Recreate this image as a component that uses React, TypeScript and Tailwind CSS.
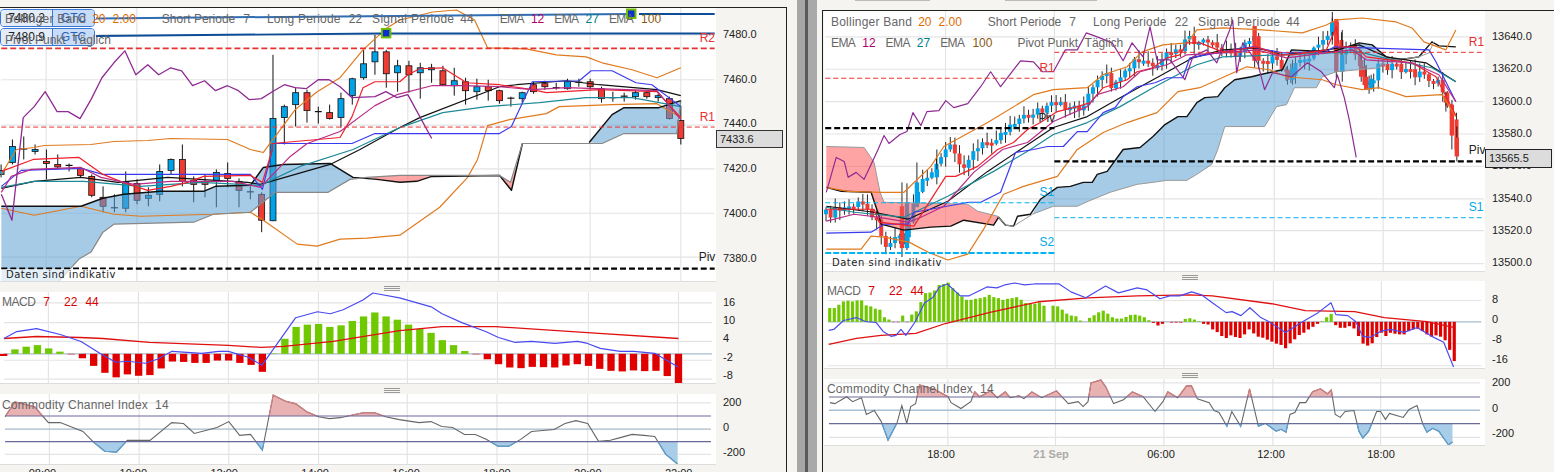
import React from 'react';

type Candle = [number, number, number, number, string];

const BLUE = '#00a2e8';
const RED = '#ee3b33';
const C_ORANGE = '#e07a1f';
const C_PURPLE = '#8e2a93';
const C_MAGENTA = '#b82c86';
const C_TEAL = '#1c8a98';
const C_KIJUN = '#3a3af0';
const C_TENKAN = '#f0202a';

// wick top, wick bottom, body top, body bottom, colour (all in screen px)
const leftCandles: Candle[] = [
  [165, 178, 171, 175, 'b'], [140, 165, 147, 163, 'b'], [137, 160, 149.5, 150.5, 'd'], [145, 155, 150, 152, 'b'],
  [150, 180, 162, 164, 'r'], [155, 170, 165, 167.5, 'r'], [164, 172, 166, 167, 'd'], [168, 178, 169, 176, 'r'],
  [175, 198, 177, 196, 'r'], [187, 213, 198, 207, 'r'], [195, 213, 208.5, 209.5, 'd'], [172, 213, 183, 209, 'b'],
  [180, 205, 184, 201, 'r'], [188, 207, 196, 199, 'b'], [165, 202, 172, 195, 'b'], [159, 175, 160, 171, 'b'],
  [145, 187, 160, 182, 'r'], [177, 203, 181, 185, 'r'], [175, 198, 183, 185, 'r'], [170, 208, 173, 182, 'b'],
  [163, 188, 174, 179, 'r'], [179, 208, 182, 191, 'r'], [185, 200, 192.5, 193.5, 'd'], [193, 233, 195, 221, 'r'],
  [55, 222, 119, 221.5, 'b'], [105, 145, 107, 118, 'b'], [88, 127, 93, 105, 'b'], [90, 123, 93, 111, 'r'],
  [107, 124, 112, 113, 'd'], [105, 120, 113, 119, 'r'], [93, 128, 99, 118, 'b'], [78, 105, 79, 96, 'b'],
  [50, 80, 64, 78, 'b'], [35, 75, 52, 62, 'b'], [50, 88, 52, 74, 'r'], [60, 92, 66, 73, 'b'],
  [61, 93, 66, 75, 'r'], [63, 99, 68, 73, 'b'], [64, 83, 68, 70, 'b'], [66, 86, 71, 85, 'r'],
  [68, 96, 81, 86, 'b'], [78, 105, 82, 91, 'r'], [79, 100, 87, 92, 'b'], [80, 101, 87, 91, 'r'],
  [90, 104, 91, 101, 'r'], [97, 107, 98.5, 99.5, 'd'], [92, 103, 93, 99, 'b'], [82, 94, 85, 92, 'r'],
  [81, 90, 84, 87, 'r'], [83, 90, 88, 89, 'd'], [79, 90, 82, 89, 'b'], [79, 87, 82.5, 83.5, 'd'],
  [79, 90, 82, 87, 'r'], [87, 103, 89, 99, 'r'], [92, 102, 98, 99, 'd'], [93, 102, 96.5, 97.5, 'd'],
  [91, 100, 93, 97, 'b'], [91, 99, 93, 97, 'r'], [94, 102, 96, 98, 'b'], [97, 120, 99, 119, 'r'],
  [106, 145, 121, 139, 'r'],
];

const leftBars = [356.7, 350, 347.3, 345.7, 349, 352.3, 355, 359, 366.7, 373.7, 378.3, 375.3, 376.7, 376, 369.3, 362.3, 362.7, 363.7, 363.7, 361.3, 361.3, 363.7, 365.7, 372.7, 354, 339.3, 327.3, 325, 324.3, 327.3, 325.7, 321.3, 316.7, 312.7, 316.7, 320, 325, 329.3, 333.3, 340.7, 345.7, 351.7, 355, 360, 365, 368.3, 369, 367.7, 368, 368.3, 366.3, 365, 366.7, 369.7, 371.7, 372.3, 371.3, 372, 371.7, 377, 384];

// zoomed-in readings of the right histogram, 0 line is 127 (3x scale)
const rightBarsZ = [85, 85, 75, 65, 63, 65, 62, 62, 77, 80, 87, 90, 113, 120, 128, 128, 108, 128, 105, 95, 67, 40, 38, 32, 15, 12, 8, 25, 38, 50, 60, 60, 57, 55, 52, 45, 52, 55, 60, 57, 55, 52, 60, 70, 70, 72, 68, 78, 127, 78, 80, 90, 102, 108, 110, 123, 127, 115, 107, 98, 93, 102, 113, 117, 117, 112, 106, 105, 108, 113, 122, 130, 138, 133, 127, 129, 129, 129, 118, 116, 120, 125, 133, 135, 150, 158, 170, 176, 168, 173, 176, 165, 150, 162, 172, 175, 181, 187, 193, 197, 207, 192, 180, 167, 160, 150, 142, 133, 125, 113, 103, 137, 145, 145, 140, 147, 170, 193, 199, 192, 173, 160, 170, 160, 163, 165, 165, 155, 150, 148, 155, 165, 172, 168, 172, 183, 212, 246];

const rightPath: [number, number][] = [[826, 215], [830, 214], [850, 207], [860, 205], [868, 211], [878, 219], [880, 240], [885, 243], [895, 238], [900, 230], [903, 240], [907, 225], [912, 208], [920, 180], [930, 175], [938, 165], [944, 150], [950, 150], [960, 168], [966, 160], [980, 147], [990, 140], [1003, 132], [1013, 120], [1017, 120], [1027, 117], [1035, 110], [1042, 113], [1053, 105], [1065, 107], [1073, 107], [1083, 107], [1090, 93], [1100, 80], [1108, 77], [1113, 90], [1122, 80], [1127, 72], [1133, 62], [1142, 62], [1150, 65], [1160, 70], [1163, 62], [1168, 53], [1178, 53], [1187, 40], [1195, 42], [1210, 45], [1223, 52], [1237, 52], [1247, 45], [1255, 33], [1258, 58], [1273, 60], [1280, 67], [1288, 75], [1293, 70], [1307, 58], [1320, 43], [1333, 25], [1338, 40], [1343, 63], [1352, 45], [1362, 70], [1367, 87], [1375, 75], [1382, 60], [1390, 67], [1410, 72], [1425, 75], [1438, 83], [1447, 97], [1453, 123], [1457.7, 147]];

// tall candles that stand out on the right chart: x, wick top, wick bottom, body top, body bottom, colour
const rightBig: [number, number, number, number, number, string][] = [
  [901, 183, 258, 207, 249, RED], [906, 184, 251, 204, 249, BLUE], [916, 163, 205, 183, 208, BLUE],
  [936, 150, 185, 170, 178, BLUE], [1255, 26, 68, 26, 61, RED], [1288, 66, 85, 70, 80, RED], [1293, 60, 85, 68, 80, BLUE],
  [1333, 12, 40, 22, 32, BLUE], [1337, 19, 78, 19, 72, RED], [1343, 30, 82, 55, 72, BLUE], [1362, 50, 82, 60, 77, RED],
  [1367, 65, 90, 77, 90, RED], [1372, 75, 90, 79, 89, BLUE], [1447, 92, 112, 96, 103, RED], [1453, 105, 150, 105, 136, RED],
  [1458, 127, 162, 138, 157, RED],
];

const noise = (i: number) => {
  const v = Math.sin(i * 12.9898) * 43758.5453;
  return v - Math.floor(v);
};

const interp = (pts: [number, number][], x: number) => {
  for (let i = 1; i < pts.length; i++) {
    if (x <= pts[i][0]) {
      const [x0, y0] = pts[i - 1];
      const [x1, y1] = pts[i];
      return y0 + ((y1 - y0) * (x - x0)) / (x1 - x0);
    }
  }
  return pts[pts.length - 1][1];
};

const rightCandles = () => {
  const out: { x: number; wt: number; wb: number; t: number; b: number; up: boolean }[] = [];
  let prev = interp(rightPath, 826);
  for (let i = 0; i < 138; i++) {
    const x = 1457.7 - 4.62 * (137 - i);
    const cur = interp(rightPath, x) + (noise(i) - 0.5) * 10;
    const t = Math.min(prev, cur);
    const b = Math.max(prev, cur, t + 3);
    out.push({ x, t, b, up: cur <= prev, wt: t - 1 - noise(i + 300) * 9, wb: b + 1 + noise(i + 600) * 9 });
    prev = cur;
  }
  return out;
};

function Lines({ items }: { items: [string, string, number?][] }) {
  return (
    <>
      {items.map(([c, p, w], i) => (
        <polyline key={i} points={p} fill="none" stroke={c} strokeWidth={w ?? 1.2} strokeLinejoin="round" />
      ))}
    </>
  );
}

function Grid({ xs, ys, x0, x1, y0, y1 }: { xs: number[]; ys: number[]; x0: number; x1: number; y0: number; y1: number }) {
  return (
    <g stroke="#e4e4e4" strokeWidth="1.2">
      {xs.map((x) => <line key={x} x1={x} x2={x} y1={y0} y2={y1} />)}
      {ys.map((y) => <line key={y} x1={x0} x2={x1} y1={y} y2={y} />)}
    </g>
  );
}

function Cci({ line, id, hi, lo, x0, x1, y0, y1 }: { line: string; id: string; hi: number; lo: number; x0: number; x1: number; y0: number; y1: number }) {
  const pts = line.trim().split(' ');
  const first = pts[0].split(',')[0];
  const last = pts[pts.length - 1].split(',')[0];
  return (
    <>
      <defs>
        <clipPath id={`${id}-hi`}><rect x={x0} y={y0} width={x1 - x0} height={hi - y0} /></clipPath>
        <clipPath id={`${id}-lo`}><rect x={x0} y={lo} width={x1 - x0} height={y1 - lo} /></clipPath>
      </defs>
      <polygon points={`${line} ${last},${hi} ${first},${hi}`} fill="#e8b2b2" clipPath={`url(#${id}-hi)`} />
      <polygon points={`${line} ${last},${lo} ${first},${lo}`} fill="#a8cde9" clipPath={`url(#${id}-lo)`} />
      <polyline points={line} fill="none" stroke="#666" strokeWidth="1.1" />
      <polyline points={line} fill="none" stroke="#d97f7f" strokeWidth="1.1" clipPath={`url(#${id}-hi)`} />
      <polyline points={line} fill="none" stroke="#5aa5dc" strokeWidth="1.1" clipPath={`url(#${id}-lo)`} />
    </>
  );
}

function Axis({ labels, rowClass, padClass }: { labels: string[]; rowClass: string; padClass: string }) {
  return (
    <div className={`flex flex-col pl-[7px] text-[11px] text-[#222] ${padClass}`}>
      {labels.map((l, i) => (
        <div key={i} className={`flex items-center ${rowClass}`}>{l}</div>
      ))}
    </div>
  );
}

function Handle({ padClass }: { padClass: string }) {
  return (
    <div className={`flex items-end pb-px ${padClass}`}>
      <div className="flex flex-col gap-px w-[16px]">
        <div className="h-px bg-[#999]" />
        <div className="h-px bg-[#999]" />
        <div className="h-px bg-[#999]" />
      </div>
    </div>
  );
}

const gray = 'text-[#666]';
const orange = 'text-[#e06c00]';

function OrderTag({ price }: { price: string }) {
  return (
    <div className="flex h-[18px] w-[95px] text-[12px] rounded-[4px] border border-[#3a78d8] overflow-hidden text-[#222]">
      <div className="flex w-[52px] items-center justify-center bg-[#e4ecf8] border-r border-[#3a78d8]">{price}</div>
      <div className="flex flex-1 items-center justify-center bg-[#c6dcf8] text-[#2a5fb0]">GTC</div>
    </div>
  );
}

// Indicator legend first row, same on both charts
function BandsLegend() {
  return (
    <>
      <span className="tracking-[0.22px]">Bollinger Band</span>
      <span className={`ml-[6px] ${orange}`}>20</span>
      <span className={`ml-[7px] ${orange}`}>2.00</span>
      <span className="ml-[26px]">Short Periode</span>
      <span className="ml-[8px]">7</span>
      <span className="ml-[17px] tracking-[0.2px]">Long Periode</span>
      <span className="ml-[8px]">22</span>
      <span className="ml-[10px] tracking-[0.3px]">Signal Periode</span>
      <span className="ml-[6px]">44</span>
    </>
  );
}

function EmaLegend() {
  return (
    <>
      <span className="tracking-[-0.6px]">EMA</span>
      <span className="ml-[7px] text-[#b0006e]">12</span>
      <span className="ml-[10px] tracking-[-0.6px]">EMA</span>
      <span className="ml-[7px] text-[#007f8f]">27</span>
      <span className="ml-[10px] tracking-[-0.6px]">EMA</span>
      <span className="ml-[8px] text-[#8a5a10]">100</span>
    </>
  );
}

function MacdLegend() {
  return (
    <div className="flex text-[12px] leading-[15px] text-[#d80000]">
      <span className={`tracking-[-0.5px] ${gray}`}>MACD</span>
      <span className="ml-[8px]">7</span>
      <span className="ml-[14px]">22</span>
      <span className="ml-[8px]">44</span>
    </div>
  );
}

function LeftWindow() {
  return (
    <div className="w-[787px] shrink-0">
      <div className="h-[7px]" />
      <div className="h-[465px] border-t border-r border-[#222]">
        <div className="flex h-[274px]">
          <div className="relative w-[716px] bg-white border-b border-[#ddd]">
            <svg viewBox="0 8 716 274" className="block w-full h-full">
              <Grid xs={[45, 136, 227, 318, 408, 499, 591, 682]} ys={[35, 80, 125.5, 169.5, 214, 258]} x0={0} x1={716} y0={8} y1={282} />
              <g>
                {leftCandles.map(([wt, wb, t, b, c], i) => {
                  const x = 682 - 11.37 * (60 - i);
                  return (
                    <g key={i}>
                      <line x1={x} x2={x} y1={wt} y2={wb} stroke="#111" strokeWidth="1" />
                      {c === 'd'
                        ? <line x1={x - 3.5} x2={x + 3.5} y1={t} y2={t} stroke="#111" strokeWidth="1.2" />
                        : <rect x={x - 3} y={t} width="6" height={b - t} fill={c === 'b' ? BLUE : RED} stroke="#111" strokeWidth="0.8" />}
                    </g>
                  );
                })}
              </g>
              <g fillOpacity="0.55">
                <polygon fill="#5da0d4" points="0,207 80,207 102,199 123,195 160,192 203,192 215,187 250,186 263,168 283,165 330,164 353,178 367,178 350,180 328,193 275,193 250,213 213,215 193,223 113,225 102,233 90,253 78,260 58,282 0,282" />
                <polygon fill="#ff5a5a" points="367,178 400,175.5 432,177 417,182 400,183 377,180" />
                <polygon fill="#ff5a5a" points="500,176 512,191 517,166 511,183" />
                <polygon fill="#5da0d4" points="590,143 613,115 625,108 660,108 682,101 678,134 625,134 603,144" />
              </g>
              <Lines items={[
                [C_ORANGE, '0,209 33,216 80,207 113,215 140,217 213,215 250,213 263,221 297,245 317,247 340,240 367,239 400,236 440,208 468,178 478,160 488,126 510,120 547,114 560,107 613,105 658,104 682,118'],
                [C_ORANGE, '0,175 15,150 33,148 43,146 90,145 113,142 147,141 170,139 227,140 250,150 263,153 295,110 317,92 340,78 363,50 387,28 400,20 433,12 457,10 475,20 488,48 527,49 557,55 587,57 603,63 633,70 658,78 682,68'],
                ['#111', '0,207 80,207 102,199 123,195 160,192 203,192 215,187 250,186 263,168 283,165 330,164 353,178 377,180 400,183 417,182 432,177 500,176 512,191 523,144', 1.5],
                ['#888', '58,282 78,260 90,253 102,233 113,225 193,223 213,215 250,213 275,193 328,193 350,180 367,178 400,176 500,176 511,183 523,144 603,144 625,134 678,134 682,101', 1.2],
                ['#111', '590,143 613,115 625,108 660,108 682,101', 1.5],
                ['#111', '0,189 33,182 80,178 117,183 167,178 247,183 260,185 330,165 360,150 400,128 420,118 500,87 517,85 567,81 600,85 658,90 682,96'],
                [C_TEAL, '0,188 33,182 83,182 140,187 200,183 260,186 300,167 353,150 400,128 443,113 487,107 540,103 587,98 633,98 682,107'],
                [C_KIJUN, '0,187 20,171 80,169 102,175 250,175 262,190 272,150 272,144 352,144 375,134 500,134 512,127 533,82 580,81 592,71 613,71 637,83 653,85 682,107'],
                [C_TENKAN, '0,172 32,160 78,158 102,175 122,183 147,191 170,187 187,183 203,177 250,176 262,183 272,150 272,144 340,138 352,117 363,88 375,82 400,82 408,75 420,69 443,68 467,83 500,85 533,90 547,93 600,90 658,92 682,118'],
                [C_MAGENTA, '0,193 10,177 30,170 80,168 100,178 133,185 170,182 233,182 260,188 290,157 307,144 340,132 375,106 397,95 432,86 463,86 500,87 533,90 567,88 658,91 682,120'],
                [C_PURPLE, '0,195 10.7,221 22,118 33,107 44,92 56,112 67,112 79,119 90,100 101,78 113,63 124,51 135,75 147,65 158,75 170,68 181,71 192,86 204,81 215,91 227,86 238,91 249,100 261,99 272,92 284,85 295,88 306,89 318,80 329,80 340,87 352,98 375,97 386,92 397,98 408,95 432,139', 1.3],
              ]} />
              <line x1="0" x2="716" y1="48.5" y2="48.5" stroke="#e83030" strokeWidth="1.6" strokeDasharray="6 3" />
              <line x1="0" x2="716" y1="127.5" y2="127.5" stroke="#e83030" strokeWidth="1" strokeDasharray="5 3" />
              <line x1="0" x2="716" y1="269.5" y2="269.5" stroke="#000" strokeWidth="2.2" strokeDasharray="6 3" />
              <polyline points="95,18.5 632,14" fill="none" stroke="#2f6db5" strokeWidth="2" />
              <line x1="640" x2="716" y1="14" y2="14" stroke="#0d4c96" strokeWidth="2" />
              <polyline points="95,36 380,33.7 716,33.7" fill="none" stroke="#0d4c96" strokeWidth="2" />
              <rect x="382" y="29" width="8.5" height="8.5" fill="#0d2fd0" stroke="#6fbf00" strokeWidth="2" />
              <rect x="628" y="9.5" width="8.5" height="8.5" fill="#0d2fd0" stroke="#6fbf00" strokeWidth="2" />
              <g fontSize="12">
                <text x="701" y="42" fill="#e83030">R2</text>
                <text x="701" y="121" fill="#e83030">R1</text>
                <text x="700" y="262" fill="#222">Piv</text>
              </g>
            </svg>
            <div className="absolute left-0 top-px flex flex-col gap-px">
              <OrderTag price="7480.2" />
              <OrderTag price="7480.9" />
            </div>
            <div className={`absolute left-[5px] top-[4px] text-[12px] leading-[15px] ${gray}`}>
              <div className="flex">
                <BandsLegend />
                <span className="ml-[26px] flex"><EmaLegend /></span>
              </div>
              <div className="mt-[6px]">Pivot Punkt&nbsp; Täglich</div>
            </div>
            <div className="absolute left-0 bottom-0 h-[12px] w-[118px] bg-white/70 pl-[6px] [font-family:'DejaVu_Sans',sans-serif] text-[10px] leading-[12px] tracking-[0.5px] text-[#222]">Daten sind indikativ</div>
          </div>
          <div className="relative flex-1">
            <Axis labels={['7480.0', '7460.0', '7440.0', '7420.0', '7400.0', '7380.0']} rowClass="h-[44.8px]" padClass="pt-[3.6px]" />
            <div className="absolute left-0 top-[122px] flex h-[18px] w-[67px] items-center border border-[#333] bg-[#dcdcdc] pl-[3px] text-[11px] text-[#222]">7433.6</div>
          </div>
        </div>
        <Handle padClass="h-[10px] pl-[384px]" />
        <div className="flex h-[92px]">
          <div className="relative w-[716px] bg-white border-b border-[#ddd]">
            <svg viewBox="0 292 716 92" className="block w-full h-full">
              <Grid xs={[45, 136, 227, 318, 408, 499, 591, 682]} ys={[303, 323, 342, 361, 380]} x0={0} x1={716} y0={292} y1={384} />
              <line x1="0" x2="716" y1="354.5" y2="354.5" stroke="#a8bccc" strokeWidth="1.2" />
              {leftBars.map((y, i) => {
                const x = 682 - 11.37 * (60 - i);
                return <rect key={i} x={x - 3.7} width="7.4" y={Math.min(y, 354.5)} height={Math.abs(y - 354.5)} fill={y < 354.5 ? '#70c800' : '#e00000'} />;
              })}
              <Lines items={[
                ['#e01010', '0,339 33,337 77,338 100,339 147,343 227,346 260,348 283,347 333,342 400,331 443,327 497,327 590,333 682,339', 1.3],
                ['#4a4af0', '0,339 13,332 33,329 57,335 78,342 97,354 113,363 125,362 143,364 155,360 170,352 200,354 217,352 227,352 247,358 261,366 295,318 317,312 330,314 343,310 363,300 373,293 400,298 432,307 443,314 463,323 487,332 500,338 517,343 533,342 557,344 580,342 590,344 603,349 623,352 637,352 658,354 682,368'],
              ]} />
            </svg>
            <div className="absolute left-[2px] top-[3px]"><MacdLegend /></div>
          </div>
          <Axis labels={['16', '10', '4', '-2', '-8']} rowClass="h-[19.2px]" padClass="pt-[1.4px]" />
        </div>
        <Handle padClass="h-[10px] pl-[384px]" />
        <div className="flex h-[71px]">
          <div className="relative w-[716px] bg-white border-b border-[#ddd]">
            <svg viewBox="0 394 716 71" className="block w-full h-full">
              <Grid xs={[45, 136, 227, 318, 408, 499, 591, 682]} ys={[403, 455.3]} x0={0} x1={716} y0={394} y1={465} />
              <line x1="0" x2="716" y1="429.7" y2="429.7" stroke="#a8b8c8" strokeWidth="1.2" />
              <Cci id="cci-l" hi={416.3} lo={442.3} x0={0} x1={716} y0={394} y1={465}
                line="0,417 10,402 30,407 44,423 56,423 79,432 90,443 101,452 113,453 124,441 147,441 169,423 181,424 192,434 215,428 227,422 238,436 249,435 261,451 272,395 284,401 295,404 306,412 318,417 329,419 340,418 363,413 375,413 386,417 400,420 420,423 432,422 443,427 454,428 466,435 477,435 488,440 500,447 511,447 523,440 534,432 557,430 568,424 579,421 591,424 602,442 614,441 625,438 636,435 648,436 659,437 670,455 682,465" />
              <line x1="0" x2="716" y1="416.3" y2="416.3" stroke="#6a6a9a" strokeWidth="1.1" />
              <line x1="0" x2="716" y1="442.3" y2="442.3" stroke="#6a6a9a" strokeWidth="1.1" />
            </svg>
            <div className={`absolute left-[2px] top-[4px] text-[12px] leading-[15px] tracking-[0.2px] ${gray}`}>Commodity Channel Index&nbsp; 14</div>
          </div>
          <Axis labels={['200', '0', '-200']} rowClass="h-[25.5px]" padClass="-mt-[3.8px]" />
        </div>
        <div className="-ml-[3px] flex pt-[2px] text-[11px] leading-[13px] text-[#222]">
          {['08:00', '10:00', '12:00', '14:00', '16:00', '18:00', '20:00', '22:00'].map((t) => (
            <div key={t} className="w-[90.9px] text-center">{t}</div>
          ))}
        </div>
      </div>
    </div>
  );
}

function Gutter() {
  return (
    <div className="flex h-[472px] w-[35px] shrink-0">
      <div className="w-[10px]" />
      <div className="w-[8px] bg-[#a6a6a6]" />
      <div className="w-[3px] bg-[#5a5a5a]" />
      <div className="w-[9px] bg-[#a9a9a9]" />
    </div>
  );
}

function RightWindow() {
  const xs = [944.7, 1054, 1164, 1274.7, 1384];
  const ys = [37, 69.5, 102, 134.5, 167, 199.5, 231.5, 264.5];
  const bars = rightBarsZ;
  return (
    <div className="flex-1">
      <div className="flex h-[10px] pl-[33px]">
        <div className="h-px w-[75px] bg-[#bbb]" />
        <div className="ml-[75px] h-px w-[92px] bg-[#bbb]" />
      </div>
      <div className="h-[462px] border-t border-l border-[#222] pl-px">
        <div className="flex h-[261px]">
          <div className="relative w-[661px] bg-white border-b border-[#ddd]">
            <svg viewBox="824 11 661 261" className="block w-full h-full">
              <Grid xs={xs} ys={ys} x0={824} x1={1485} y0={11} y1={272} />
              {rightCandles().map((c, i) => (
                <g key={i}>
                  <line x1={c.x} x2={c.x} y1={c.wt} y2={c.wb} stroke="#111" strokeWidth="0.9" />
                  <rect x={c.x - 2} y={c.t} width="4" height={c.b - c.t} fill={c.up ? BLUE : RED} />
                </g>
              ))}
              {rightBig.map(([x, wt, wb, t, b, c]) => (
                <g key={x}>
                  <line x1={x} x2={x} y1={wt} y2={wb} stroke="#111" strokeWidth="0.9" />
                  <rect x={x - 2.2} y={t} width="4.4" height={b - t} fill={c} />
                </g>
              ))}
              <g fillOpacity="0.55">
                <polygon fill="#ff5a5a" points="825,147 863,148 873,163 879,193 883,203 967,205 977,212 997,217 998,218 993,226 963,221 950,227 930,228 903,231 880,225 878,217 870,193 840,192 825,188" />
                <polygon fill="#5da0d4" points="1032,215 1040,200 1057,188 1070,187 1083,183 1092,183 1097,175 1107,172 1123,150 1140,148 1153,137 1165,125 1178,117 1187,117 1197,103 1205,98 1218,97 1225,88 1235,80 1252,77 1260,75 1283,70 1292,50 1333,52 1360,43 1373,45 1387,57 1400,60 1380,68 1337,72 1323,77 1317,88 1295,88 1287,105 1277,107 1265,127 1225,127 1218,150 1212,165 1197,175 1187,181 1167,181 1153,183 1137,185 1110,193 1088,202 1077,207 1053,207" />
              </g>
              <Lines items={[
                ['#111', '825,188 840,192 870,193 878,217 880,225 903,231 930,228 950,227 963,221 993,226 998,218 1005,226 1013,227 1017,217 1030,215 1040,200 1057,188 1070,187 1083,183 1092,183 1097,175 1107,172 1123,150 1140,148 1153,137 1165,125 1178,117 1187,117 1197,103 1205,98 1218,97 1225,88 1235,80 1252,77 1260,75 1283,70 1292,50 1333,52 1360,43 1373,45 1387,57 1400,60 1420,57 1433,42 1440,46 1457,47', 1.4],
                ['#999', '825,147 863,148 873,163 879,193 883,203 967,205 977,212 997,217 1005,226 1013,227 1032,215 1053,207 1077,207 1088,202 1110,193 1137,185 1153,183 1167,181 1187,181 1197,175 1212,165 1218,150 1225,127 1265,127 1277,107 1287,105 1295,88 1317,88 1323,77 1337,72 1380,68 1387,58 1400,60 1420,57 1430,53 1435,42', 1],
                [C_ORANGE, '825,188 847,192 880,193 903,193 930,167 943,147 987,123 1033,95 1053,90 1087,88 1103,75 1127,67 1142,52 1163,45 1187,43 1197,30 1223,28 1263,30 1303,33 1327,25 1337,20 1363,18 1397,22 1413,28 1425,42 1447,50 1457,30'],
                [C_ORANGE, '825,250 860,250 870,237 883,238 908,243 927,253 947,261 967,255 983,230 1003,195 1023,187 1040,182 1057,177 1077,150 1103,133 1127,123 1157,113 1178,92 1200,88 1247,67 1270,70 1287,77 1323,80 1337,85 1363,90 1380,88 1407,97 1443,95 1457,117'],
                ['#111', '825,207 873,213 907,220 947,202 987,172 1023,148 1053,128 1087,117 1120,98 1153,80 1193,58 1223,50 1257,48 1283,55 1327,50 1360,45 1387,57 1427,63 1457,82'],
                [C_TEAL, '825,208 853,213 903,218 947,197 993,172 1030,150 1053,135 1087,123 1120,107 1153,88 1187,70 1197,65 1223,57 1280,55 1330,53 1360,52 1393,60 1433,68 1457,82'],
                [C_KIJUN, '825,234 870,233 883,225 907,225 913,213 968,203 980,203 1000,193 1015,153 1033,150 1047,147 1063,147 1077,132 1087,132 1103,113 1115,108 1123,97 1137,87 1155,83 1167,78 1183,78 1190,58 1223,52 1253,47 1283,53 1327,52 1335,47 1430,50 1437,62 1457,102'],
                [C_TENKAN, '825,210 873,210 878,223 913,227 945,177 955,177 977,167 997,150 1013,143 1027,130 1040,123 1057,112 1077,107 1090,103 1103,88 1127,80 1137,72 1153,68 1167,58 1180,55 1187,43 1200,43 1223,52 1257,47 1280,55 1293,55 1327,50 1337,27 1340,47 1357,47 1367,57 1413,63 1437,77 1457,116'],
                [C_MAGENTA, '825,222 853,215 877,218 907,223 920,218 943,207 973,173 1002,150 1027,143 1053,122 1087,107 1097,95 1123,87 1140,72 1167,65 1187,55 1223,53 1257,50 1287,58 1327,53 1353,50 1367,60 1413,63 1440,75 1457,102'],
                [C_PURPLE, '825,193 835,158 843,162 847,178 855,173 863,180 870,165 877,150 883,136 888,144 899,135 906,132 912,113 920,126 926,112 938,111 945,101 953,108 967,104 980,87 990,72 1000,87 1020,61 1033,62 1042,72 1053,72 1065,50 1077,50 1086,33 1097,37 1112,43 1123,61 1132,43 1143,57 1150,27 1157,60 1170,60 1185,80 1193,57 1207,50 1217,63 1230,30 1233,20 1237,73 1243,43 1258,63 1265,90 1273,73 1292,77 1308,63 1322,72 1335,88 1338,75 1345,98 1350,120 1357,158', 1.2],
              ]} />
              <line x1="824" x2="1054" y1="78.5" y2="78.5" stroke="#e83030" strokeWidth="1" strokeDasharray="5 3" />
              <line x1="1054" x2="1485" y1="52.5" y2="52.5" stroke="#e83030" strokeWidth="1" strokeDasharray="5 3" />
              <line x1="824" x2="1054" y1="128.5" y2="128.5" stroke="#000" strokeWidth="2.2" strokeDasharray="6 3" />
              <line x1="1054" x2="1485" y1="162" y2="162" stroke="#000" strokeWidth="2.2" strokeDasharray="6 3" />
              <line x1="824" x2="1054" y1="203.5" y2="203.5" stroke="#00b4f0" strokeWidth="1" strokeDasharray="5 3" />
              <line x1="1054" x2="1485" y1="218.5" y2="218.5" stroke="#00b4f0" strokeWidth="1" strokeDasharray="5 3" />
              <line x1="824" x2="1054" y1="254" y2="254" stroke="#00b4f0" strokeWidth="2" strokeDasharray="6 2" />
              <g fontSize="12">
                <text x="1039" y="72" fill="#e83030">R1</text>
                <text x="1470" y="46" fill="#e83030">R1</text>
                <text x="1038" y="122" fill="#222">Piv</text>
                <text x="1470" y="155" fill="#222">Piv</text>
                <text x="1039" y="197" fill="#00a8e8">S1</text>
                <text x="1470" y="212" fill="#00a8e8">S1</text>
                <text x="1039" y="247" fill="#00a8e8">S2</text>
              </g>
            </svg>
            <div className={`absolute left-[7px] top-[4px] text-[12px] leading-[15px] ${gray}`}>
              <div className="flex"><BandsLegend /></div>
              <div className="mt-[6px] flex">
                <EmaLegend />
                <span className="ml-[25px]">Pivot Punkt&nbsp; Täglich</span>
              </div>
            </div>
            <div className="absolute left-[8px] bottom-[2px] w-[118px] [font-family:'DejaVu_Sans',sans-serif] text-[10px] leading-[12px] tracking-[0.5px] text-[#222]">Daten sind indikativ</div>
          </div>
          <div className="relative flex-1">
            <Axis labels={['13640.0', '13620.0', '13600.0', '13580.0', '13560.0', '13540.0', '13520.0', '13500.0']} rowClass="h-[32.4px]" padClass="pt-[8.8px]" />
            <div className="absolute left-0 top-[138px] flex h-[19px] w-[67px] items-center border border-[#222] bg-[#dcdcdc] pl-[3px] text-[11px] text-[#222]">13565.5</div>
          </div>
        </div>
        <Handle padClass="h-[9px] pl-[358px]" />
        <div className="flex h-[88px]">
          <div className="relative w-[661px] bg-white border-b border-[#ddd]">
            <svg viewBox="824 281 661 88" className="block w-full h-full">
              <Grid xs={xs} ys={[300.7, 344.3, 366.7]} x0={824} x1={1485} y0={281} y1={369} />
              <line x1="824" x2="1485" y1="322.3" y2="322.3" stroke="#a8bccc" strokeWidth="1.2" />
              {bars.map((z, i) => {
                const x = 826 + (i * (1457.7 - 826)) / (bars.length - 1);
                const y = 280 + z / 3;
                return <rect key={i} x={x - 1.6} width="3.2" y={Math.min(y, 322.3)} height={Math.abs(y - 322.3)} fill={y < 322.3 ? '#70c800' : '#e00000'} />;
              })}
              <Lines items={[
                ['#e01010', '825,345 853,339 878,336 913,334 943,324 987,313 1037,302 1087,298 1137,296 1190,295 1213,296 1273,304 1307,311 1357,312 1387,318 1430,322 1457,328', 1.3],
                ['#4a4af0', '825,331 830,330 840,321 853,318 862,322 873,323 880,332 888,337 893,336 898,330 903,336 912,323 922,303 930,298 937,287 945,284 958,296 967,296 985,287 995,288 1003,285 1013,283 1023,285 1033,284 1058,284 1070,292 1085,298 1105,286 1118,293 1137,288 1147,290 1160,299 1170,296 1180,296 1192,292 1202,295 1213,303 1227,313 1233,312 1242,316 1251,308 1262,318 1270,322 1287,333 1303,323 1320,313 1333,303 1338,315 1350,316 1358,322 1365,337 1373,338 1383,332 1393,330 1407,333 1420,328 1435,337 1447,343 1457,368'],
              ]} />
            </svg>
            <div className="absolute left-[3px] top-[3px]"><MacdLegend /></div>
          </div>
          <Axis labels={['8', '0', '-8', '-16']} rowClass="h-[21.6px]" padClass="pt-[8.2px]" />
        </div>
        <Handle padClass="h-[10px] pl-[358px]" />
        <div className="flex h-[67px]">
          <div className="relative w-[661px] bg-white border-b border-[#ddd]">
            <svg viewBox="824 379 661 67" className="block w-full h-full">
              <Grid xs={xs} ys={[383, 438.3]} x0={824} x1={1485} y0={379} y1={446} />
              <line x1="824" x2="1485" y1="410.7" y2="410.7" stroke="#a8c0d4" strokeWidth="1.4" />
              <Cci id="cci-r" hi={397.3} lo={424.3} x0={824} x1={1485} y0={379} y1={446}
                line="825,403 830,404 842,397 848,402 857,398 862,415 870,411 877,422 884,441 893,424 898,406 903,424 907,407 912,404 916,385 930,389 945,397 948,403 958,409 968,402 972,392 977,397 988,391 995,398 1003,392 1008,398 1017,396 1022,399 1030,392 1040,398 1055,391 1067,404 1077,402 1082,407 1087,402 1090,383 1100,380 1105,387 1113,404 1123,400 1132,392 1143,397 1155,412 1163,402 1168,392 1178,398 1187,386 1192,386 1198,399 1210,403 1215,411 1220,413 1228,427 1233,412 1242,427 1251,389 1260,427 1267,424 1278,432 1283,430 1288,433 1292,415 1297,413 1302,403 1308,403 1315,392 1323,389 1330,394 1334,390 1338,415 1343,418 1348,412 1357,411 1362,432 1366,439 1372,432 1380,412 1384,412 1389,420 1393,414 1407,418 1413,410 1421,406 1427,425 1431,433 1437,429 1443,432 1453,446 1457,443" />
              <line x1="824" x2="1485" y1="397.3" y2="397.3" stroke="#6a6a9a" strokeWidth="1.1" />
              <line x1="824" x2="1485" y1="424.3" y2="424.3" stroke="#6a6a9a" strokeWidth="1.1" />
            </svg>
            <div className={`absolute left-[3px] top-[3px] text-[12px] leading-[15px] tracking-[0.2px] ${gray}`}>Commodity Channel Index&nbsp; 14</div>
          </div>
          <Axis labels={['200', '0', '-200']} rowClass="h-[27px]" padClass="-mt-[9.5px]" />
        </div>
        <div className="flex pl-[62px] pt-[2px] text-[11px] leading-[13px] text-[#222]">
          <div className="w-[110px] text-center">18:00</div>
          <div className="w-[110px] text-center font-bold text-[#aaa]">21 Sep</div>
          <div className="w-[110px] text-center">06:00</div>
          <div className="w-[110px] text-center">12:00</div>
          <div className="w-[110px] text-center">18:00</div>
        </div>
      </div>
    </div>
  );
}

export default function App() {
  return (
    <div className="flex h-[472px] w-[1554px] overflow-hidden bg-[#f5f4f0] [font-family:'Liberation_Sans',Arial,sans-serif]">
      <LeftWindow />
      <Gutter />
      <RightWindow />
    </div>
  );
}
